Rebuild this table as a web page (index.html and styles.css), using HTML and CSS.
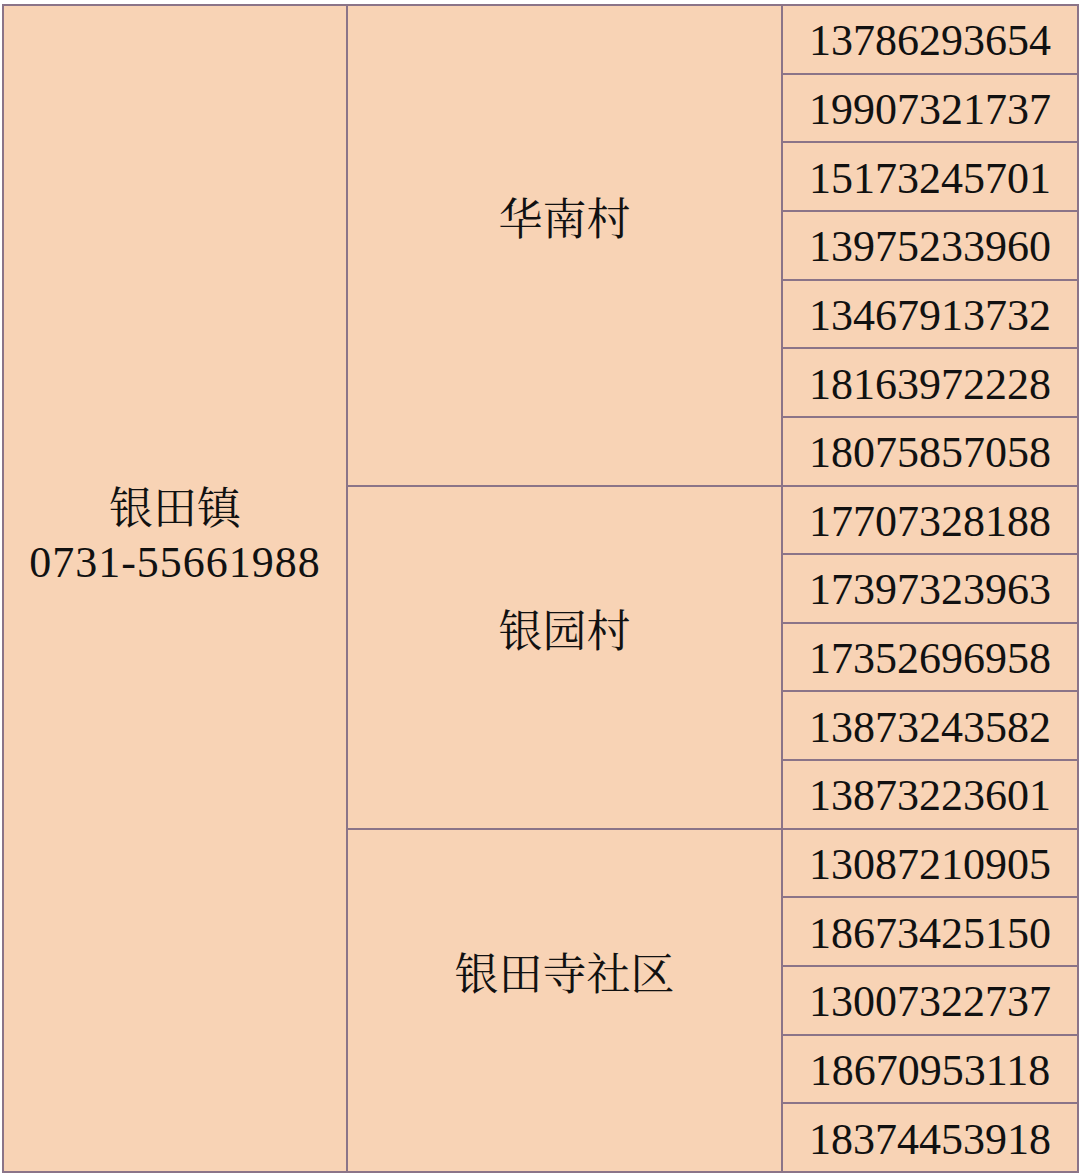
FILE: index.html
```html
<!DOCTYPE html>
<html>
<head>
<meta charset="utf-8">
<title>银田镇</title>
<link rel="stylesheet" href="styles.css">
</head>
<body>
<div class="sheet">
  <div class="cell town">
    <div class="line zh">银田镇</div>
    <div class="line num">0731-55661988</div>
  </div>
  <div class="cell village v1"><div class="line zh">华南村</div></div>
  <div class="cell village v2"><div class="line zh">银园村</div></div>
  <div class="cell village v3"><div class="line zh">银田寺社区</div></div>
  <div class="cell phone">13786293654</div>
  <div class="cell phone">19907321737</div>
  <div class="cell phone">15173245701</div>
  <div class="cell phone">13975233960</div>
  <div class="cell phone">13467913732</div>
  <div class="cell phone">18163972228</div>
  <div class="cell phone">18075857058</div>
  <div class="cell phone">17707328188</div>
  <div class="cell phone">17397323963</div>
  <div class="cell phone">17352696958</div>
  <div class="cell phone">13873243582</div>
  <div class="cell phone">13873223601</div>
  <div class="cell phone">13087210905</div>
  <div class="cell phone">18673425150</div>
  <div class="cell phone">13007322737</div>
  <div class="cell phone">18670953118</div>
  <div class="cell phone">18374453918</div>
</div>
</body>
</html>
```
FILE: styles.css
```css
html, body {
  margin: 0;
  padding: 0;
  background: #ffffff;
}
body {
  padding: 4px 0 0 2px;
}
.sheet {
  display: grid;
  grid-template-columns: 344px 435px 296px;
  grid-template-rows: repeat(17, 1fr);
  width: 1075px;
  height: 1167px;
  border-left: 2px solid #8b7488;
  border-top: 2px solid #8b7488;
  background: #f8d3b5;
  font-family: "Liberation Serif", "Noto Serif CJK SC", serif;
  color: #111111;
}
.cell {
  border-right: 2px solid #8b7488;
  border-bottom: 2px solid #8b7488;
  display: flex;
  flex-direction: column;
  align-items: center;
  justify-content: center;
  font-size: 44px;
  line-height: 58px;
}
.zh {
  font-family: "Noto Serif CJK SC", serif;
}
.town {
  grid-column: 1;
  grid-row: 1 / span 17;
  padding-bottom: 108px;
}
.village {
  grid-column: 2;
  padding-bottom: 58px;
}
.v1 { grid-row: 1 / span 7; }
.v2 { grid-row: 8 / span 5; }
.v3 { grid-row: 13 / span 5; }
.phone {
  grid-column: 3;
  padding-top: 4px;
  font-family: "Liberation Serif", serif;
}
.num {
  font-family: "Liberation Serif", serif;
  letter-spacing: 1px;
}
```
